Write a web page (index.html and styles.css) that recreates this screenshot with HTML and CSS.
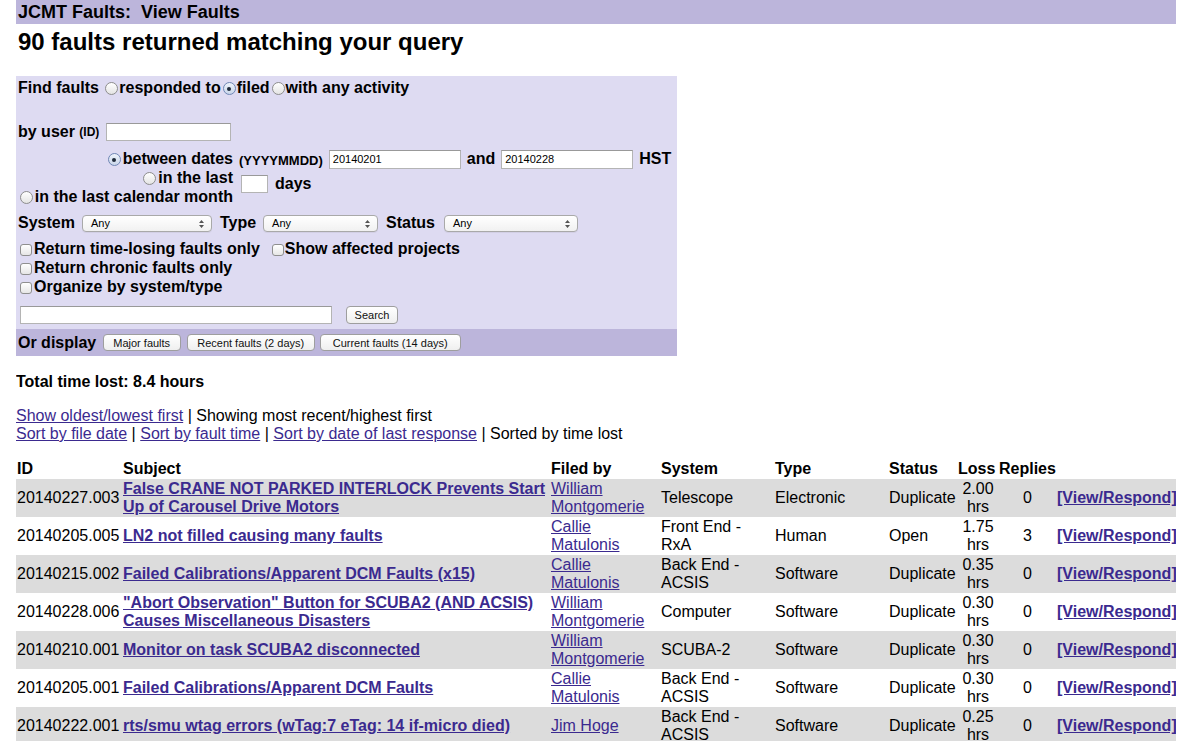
FILE: index.html
```html
<!DOCTYPE html>
<html>
<head>
<meta charset="utf-8">
<title>JCMT Faults: View Faults</title>
<link rel="stylesheet" href="styles.css">
</head>
<body>
<div class="topbar">JCMT Faults:&nbsp; View Faults</div>
<h1 class="title">90 faults returned matching your query</h1>

<form class="query">
  <div class="main">
    <div class="find">Find faults <span class="radio"></span>responded to<span class="radio on"></span>filed<span class="radio"></span>with any activity</div>
    <div class="byuser">by user <small class="hint">(ID)</small><input class="txt user" type="text"></div>
    <div class="dates">
      <div class="dl1"><span class="radio on"></span>between dates</div>
      <div class="dr1"><small class="hint">(YYYYMMDD)</small><input class="txt date" type="text" value="20140201"><span>and</span><input class="txt date" type="text" value="20140228"><span>HST</span></div>
      <div class="dl2"><span class="radio"></span>in the last<br><span class="radio"></span>in the last calendar month</div>
      <div class="dr2"><input class="txt days" type="text"><span>days</span></div>
    </div>
    <div class="filters">
      <span>System</span><span class="select sel-sys">Any<svg class="arrows" width="5" height="8" viewBox="0 0 5 8"><path d="M0 3 L2.5 0 L5 3 Z M0 5 L2.5 8 L5 5 Z" fill="#555"/></svg></span>
      <span>Type</span><span class="select sel-type">Any<svg class="arrows" width="5" height="8" viewBox="0 0 5 8"><path d="M0 3 L2.5 0 L5 3 Z M0 5 L2.5 8 L5 5 Z" fill="#555"/></svg></span>
      <span>Status</span><span class="select sel-status">Any<svg class="arrows" width="5" height="8" viewBox="0 0 5 8"><path d="M0 3 L2.5 0 L5 3 Z M0 5 L2.5 8 L5 5 Z" fill="#555"/></svg></span>
    </div>
    <div class="checks">
      <div><span class="check"></span>Return time-losing faults only<span class="check second"></span>Show affected projects</div>
      <div><span class="check"></span>Return chronic faults only</div>
      <div><span class="check"></span>Organize by system/type</div>
    </div>
    <div class="searchrow"><input class="txt searchbox" type="text"><button class="btn search" type="button">Search</button></div>
  </div>
  <div class="display">Or display <button class="btn b-major" type="button">Major faults</button><button class="btn b-recent" type="button">Recent faults (2 days)</button><button class="btn b-current" type="button">Current faults (14 days)</button></div>
</form>

<div class="total">Total time lost: 8.4 hours</div>

<div class="sort">
  <div><a href="#">Show oldest/lowest first</a> | Showing most recent/highest first</div>
  <div><a href="#">Sort by file date</a> | <a href="#">Sort by fault time</a> | <a href="#">Sort by date of last response</a> | Sorted by time lost</div>
</div>

<table class="faults">
  <colgroup>
    <col class="c-id"><col class="c-subj"><col class="c-by"><col class="c-sys"><col class="c-type"><col class="c-status"><col class="c-loss"><col class="c-rep"><col class="c-view">
  </colgroup>
  <thead>
    <tr><th>ID</th><th>Subject</th><th>Filed by</th><th>System</th><th>Type</th><th>Status</th><th>Loss</th><th>Replies</th><th></th></tr>
  </thead>
  <tbody>
    <tr class="alt">
      <td>20140227.003</td>
      <td><a class="subj" href="#">False CRANE NOT PARKED INTERLOCK Prevents Start Up of Carousel Drive Motors</a></td>
      <td><a href="#">William Montgomerie</a></td>
      <td>Telescope</td><td>Electronic</td><td>Duplicate</td>
      <td class="ctr">2.00 hrs</td><td class="ctr">0</td>
      <td class="view"><a href="#">[View/Respond]</a></td>
    </tr>
    <tr>
      <td>20140205.005</td>
      <td><a class="subj" href="#">LN2 not filled causing many faults</a></td>
      <td><a href="#">Callie Matulonis</a></td>
      <td>Front End - RxA</td><td>Human</td><td>Open</td>
      <td class="ctr">1.75 hrs</td><td class="ctr">3</td>
      <td class="view"><a href="#">[View/Respond]</a></td>
    </tr>
    <tr class="alt">
      <td>20140215.002</td>
      <td><a class="subj" href="#">Failed Calibrations/Apparent DCM Faults (x15)</a></td>
      <td><a href="#">Callie Matulonis</a></td>
      <td>Back End - ACSIS</td><td>Software</td><td>Duplicate</td>
      <td class="ctr">0.35 hrs</td><td class="ctr">0</td>
      <td class="view"><a href="#">[View/Respond]</a></td>
    </tr>
    <tr>
      <td>20140228.006</td>
      <td><a class="subj" href="#">"Abort Observation" Button for SCUBA2 (AND ACSIS) Causes Miscellaneous Disasters</a></td>
      <td><a href="#">William Montgomerie</a></td>
      <td>Computer</td><td>Software</td><td>Duplicate</td>
      <td class="ctr">0.30 hrs</td><td class="ctr">0</td>
      <td class="view"><a href="#">[View/Respond]</a></td>
    </tr>
    <tr class="alt">
      <td>20140210.001</td>
      <td><a class="subj" href="#">Monitor on task SCUBA2 disconnected</a></td>
      <td><a href="#">William Montgomerie</a></td>
      <td>SCUBA-2</td><td>Software</td><td>Duplicate</td>
      <td class="ctr">0.30 hrs</td><td class="ctr">0</td>
      <td class="view"><a href="#">[View/Respond]</a></td>
    </tr>
    <tr>
      <td>20140205.001</td>
      <td><a class="subj" href="#">Failed Calibrations/Apparent DCM Faults</a></td>
      <td><a href="#">Callie Matulonis</a></td>
      <td>Back End - ACSIS</td><td>Software</td><td>Duplicate</td>
      <td class="ctr">0.30 hrs</td><td class="ctr">0</td>
      <td class="view"><a href="#">[View/Respond]</a></td>
    </tr>
    <tr class="alt">
      <td>20140222.001</td>
      <td><a class="subj" href="#">rts/smu wtag errors (wTag:7 eTag: 14 if-micro died)</a></td>
      <td><a href="#">Jim Hoge</a></td>
      <td>Back End - ACSIS</td><td>Software</td><td>Duplicate</td>
      <td class="ctr">0.25 hrs</td><td class="ctr">0</td>
      <td class="view"><a href="#">[View/Respond]</a></td>
    </tr>
  </tbody>
</table>
</body>
</html>
```

FILE: styles.css
```css
html, body {
  background: #ffffff;
}
body {
  margin: 0 8px 0 16px;
  font-family: "Liberation Sans", Arial, Helvetica, sans-serif;
  font-size: 16px;
  line-height: 18px;
  color: #000;
}
a {
  color: #3b2a8f;
  text-decoration: underline;
}

.topbar {
  background: #bcb5db;
  height: 24px;
  line-height: 24px;
  font-size: 18px;
  font-weight: bold;
  padding-left: 2px;
}
.title {
  margin: 4px 0 20px 2px;
  font-size: 24px;
  line-height: 28px;
  font-weight: bold;
}

/* ---------- query form ---------- */
.query {
  width: 661px;
  margin: 0;
  background: #dedbf2;
  font-weight: bold;
}
.main {
  padding: 3px 2px 5px 2px;
}
.find {
  height: 18px;
  line-height: 18px;
  white-space: nowrap;
}
.find .radio {
  margin: 0 1px 0 2px;
}
.radio {
  display: inline-block;
  box-sizing: border-box;
  width: 13px;
  height: 13px;
  margin: 0 2px 0 2px;
  border: 1px solid #8d8d8d;
  border-radius: 50%;
  background: linear-gradient(#ffffff, #e4e4e4);
  vertical-align: -2px;
  position: relative;
}
.radio.on {
  border-color: #6f86b4;
  background: linear-gradient(#eef3fb, #c9d6ea);
}
.radio.on::after {
  content: "";
  position: absolute;
  left: 3.5px;
  top: 3.5px;
  width: 4px;
  height: 4px;
  border-radius: 50%;
  background: #1f2a3a;
}
.hint {
  font-size: 12px;
  font-weight: bold;
}
.byuser {
  margin-top: 25px;
  height: 20px;
  display: flex;
  align-items: center;
  white-space: pre;
}
.txt {
  box-sizing: border-box;
  border: 1px solid #b4b4b4;
  border-top-color: #999;
  background: #fff;
  font-family: "Liberation Sans", Arial, sans-serif;
  font-size: 11px;
  padding: 0 3px;
  margin: 0;
  outline: none;
}
.user {
  width: 125px;
  height: 18px;
  margin-left: 7px;
}
.dates {
  margin-top: 8px;
  display: grid;
  grid-template-columns: 217px auto;
  grid-template-rows: 18px 38px;
  margin-left: -2px;
}
.dl1, .dl2 {
  text-align: right;
  white-space: nowrap;
}
.dl1 {
  line-height: 18px;
}
.dl2 {
  line-height: 19px;
}
.dr1, .dr2 {
  display: flex;
  align-items: center;
  gap: 6px;
  padding-left: 6px;
  white-space: nowrap;
}
.dr1 .hint {
  font-size: 13px;
  margin-top: 3px;
}
.date {
  width: 132px;
  height: 19px;
}
.dr2 {
  gap: 7px;
  align-items: center;
  align-self: start;
  padding-left: 8px;
  padding-top: 7px;
}
.days {
  width: 27px;
  height: 18px;
}
.filters {
  margin-top: 8px;
  height: 18px;
  display: flex;
  align-items: center;
  white-space: nowrap;
}
.select {
  box-sizing: border-box;
  display: inline-flex;
  align-items: center;
  position: relative;
  height: 17px;
  margin: 0 8px 0 8px;
  padding-left: 8px;
  border: 1px solid #a9a9a9;
  border-radius: 4px;
  background: linear-gradient(#ffffff, #f1f1f1);
  font-size: 11px;
  font-weight: normal;
  box-shadow: 0 1px 0 rgba(0,0,0,0.05);
}
.select .arrows {
  position: absolute;
  right: 7px;
  top: 4px;
}
.sel-sys { width: 130px; margin-left: 7px; }
.sel-type { width: 115px; margin-left: 7px; }
.sel-status { width: 134px; margin-left: 9px; }

.checks {
  margin-top: 7px;
  line-height: 19px;
  white-space: nowrap;
}
.check {
  display: inline-block;
  box-sizing: border-box;
  width: 12px;
  height: 12px;
  margin: 0 2px 0 2px;
  border: 1px solid #8f8f8f;
  border-radius: 3px;
  background: linear-gradient(#ffffff, #e6e6e6);
  vertical-align: -2px;
}
.check.second {
  margin-left: 12px;
  margin-right: 1px;
}
.searchrow {
  margin-top: 10px;
  height: 18px;
  display: flex;
  align-items: center;
}
.searchbox {
  width: 312px;
  height: 18px;
  margin-left: 2px;
}
.btn {
  box-sizing: border-box;
  height: 18px;
  padding: 0;
  border: 1px solid #9e9e9e;
  border-radius: 4px;
  background: linear-gradient(#ffffff, #efefef);
  font-family: "Liberation Sans", Arial, sans-serif;
  font-size: 11px;
  font-weight: normal;
  color: #111;
  line-height: 16px;
  margin: 0;
  text-align: center;
}
.search {
  margin-left: 14px;
  width: 52px;
}
.display {
  background: #bcb5db;
  height: 27px;
  display: flex;
  align-items: center;
  padding-left: 2px;
  white-space: pre;
}
.display .btn {
  height: 17px;
  margin-left: 6px;
}
.display .b-major {
  margin-left: 2px;
  width: 78px;
}
.display .b-recent {
  width: 128px;
}
.display .b-current {
  margin-left: 5px;
  width: 141px;
}

/* ---------- summary ---------- */
.total {
  margin-top: 17px;
  font-weight: bold;
}
.sort {
  margin-top: 16px;
}

/* ---------- table ---------- */
.faults {
  margin-top: 16px;
  width: 1160px;
  border-collapse: collapse;
  table-layout: fixed;
}
.c-id { width: 106px; }
.c-subj { width: 428px; }
.c-by { width: 110px; }
.c-sys { width: 114px; }
.c-type { width: 114px; }
.c-status { width: 69px; }
.c-loss { width: 41px; }
.c-rep { width: 58px; }
.c-view { width: 120px; }

.faults th {
  text-align: left;
  font-weight: bold;
  padding: 1px 0 1px 1px;
  height: 18px;
  white-space: nowrap;
}
.faults td {
  padding: 1px 0 1px 1px;
  height: 36px;
  vertical-align: middle;
}
.faults tr.alt td {
  background: #dcdcdc;
}
.faults .subj {
  font-weight: bold;
}
.faults .ctr {
  text-align: center;
}
.faults .view {
  white-space: nowrap;
  text-align: right;
  padding-right: 0;
}
.faults .view a {
  font-weight: bold;
}
```
